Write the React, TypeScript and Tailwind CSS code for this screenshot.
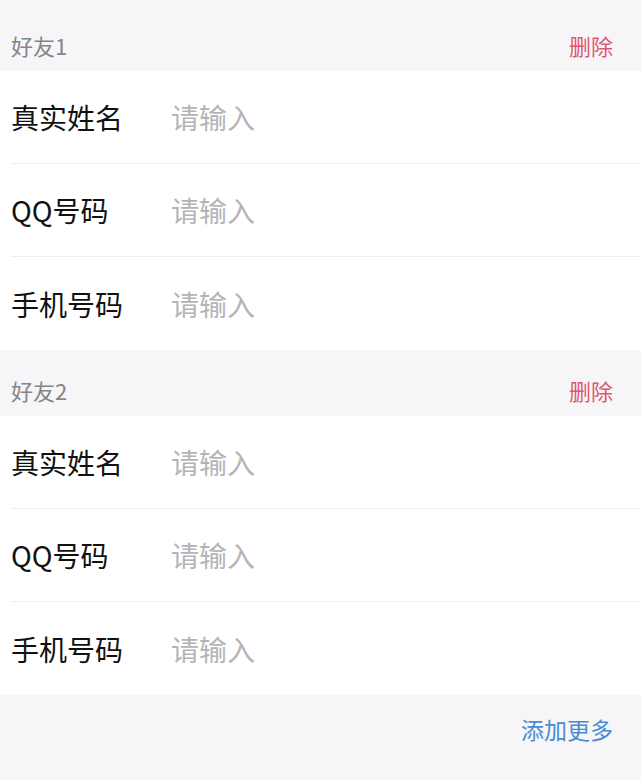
const font = { fontFamily: '"Noto Sans CJK SC", "Noto Sans", sans-serif' };

const fields = ["真实姓名", "QQ号码", "手机号码"];

function FriendBlock({ index, first }: { index: number; first?: boolean }) {
  return (
    <div>
      <div
        className={`flex items-end justify-between bg-[#f6f6f8] pl-[11px] pr-[28px] pb-[11px] ${
          first ? "h-[71px]" : "h-[66px]"
        }`}
      >
        <span className="text-[22px] leading-[30px] text-[#85858a]">好友{index}</span>
        <span className="text-[22px] leading-[30px] text-[#e0566e]">删除</span>
      </div>
      <div className="bg-white">
        {fields.map((label, i) => (
          <div key={label} className="pl-[11px]">
            <div
              className={`flex h-[93px] items-center ${
                i < fields.length - 1 ? "border-b border-[#efeff1]" : ""
              }`}
            >
              <span className="w-[160px] text-[28px] text-[#111111]">{label}</span>
              <input
                placeholder="请输入"
                className="min-w-0 flex-1 bg-transparent text-[28px] text-[#111111] outline-none placeholder:text-[#b4b4b8]"
                style={font}
              />
            </div>
          </div>
        ))}
      </div>
    </div>
  );
}

export default function App() {
  return (
    <div className="min-h-[780px] w-full bg-[#f6f6f8]" style={font}>
      <FriendBlock index={1} first />
      <FriendBlock index={2} />
      <div className="flex h-[83px] items-center justify-end pb-[14px] pr-[28px]">
        <span className="text-[23px] text-[#4b8bd1]">添加更多</span>
      </div>
    </div>
  );
}
